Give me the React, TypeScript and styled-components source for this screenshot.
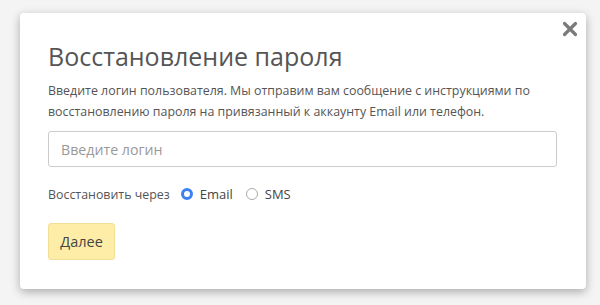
import React from "react";
import styled, { createGlobalStyle } from "styled-components";

const Global = createGlobalStyle`
  html, body { margin: 0; padding: 0; background: #f4f4f4; }
  body { font-family: "Open Sans", "DejaVu Sans", sans-serif; }
  * { box-sizing: border-box; }
`;

const Page = styled.div`
  width: 600px;
  height: 305px;
  padding: 13px 14px 16px 20px;
  background: #f4f4f4;
`;

const Modal = styled.div`
  position: relative;
  width: 566px;
  height: 276px;
  background: #fff;
  border-radius: 4px;
  box-shadow: 0 3px 10px rgba(0, 0, 0, 0.3);
  padding: 25px 28px 0 28px;
  display: flex;
  flex-direction: column;
`;

const Close = styled.button`
  position: absolute;
  top: 7px;
  right: 7px;
  width: 18px;
  height: 18px;
  padding: 0;
  border: 0;
  background: transparent;
  cursor: pointer;
  display: flex;
  align-items: center;
  justify-content: center;
`;

const Title = styled.h1`
  margin: 0;
  font-size: 25px;
  font-weight: 400;
  line-height: 36px;
  color: #555;
`;

const Desc = styled.p`
  margin: 6px 0 0;
  font-size: 12.4px;
  line-height: 21px;
  color: #555;
`;

const Input = styled.input`
  margin-top: 9px;
  width: 509px;
  height: 36px;
  border: 1px solid #ccc;
  border-radius: 3px;
  padding: 0 12px;
  font-family: inherit;
  font-size: 14.2px;
  color: #555;
  outline: none;
  &::placeholder { color: #999; }
`;

const Row = styled.div`
  margin-top: 18px;
  display: flex;
  align-items: center;
  font-size: 12.4px;
  color: #555;
  height: 18px;
`;

const RowLabel = styled.span`
  margin-right: 11px;
`;

const RadioLabel = styled.label`
  display: flex;
  align-items: center;
  gap: 7px;
  margin-right: 13px;
  font-size: 13px;
  color: #444;
`;

const RadioDot = styled.span<{ $checked?: boolean }>`
  width: 12px;
  height: 12px;
  border-radius: 50%;
  box-sizing: border-box;
  background: #fff;
  border: ${p => (p.$checked ? "3.5px solid #3b82f0" : "1px solid #aaa")};
`;

const Button = styled.button`
  margin-top: 20px;
  align-self: flex-start;
  width: 67px;
  height: 37px;
  background: #fdeda7;
  border: 1px solid #f1df95;
  border-radius: 3px;
  font-family: inherit;
  font-size: 14.5px;
  color: #444;
  cursor: pointer;
`;

export default function App() {
  return (
    <>
      <Global />
      <Page>
        <Modal>
          <Close aria-label="Закрыть">
            <svg width="16" height="16" viewBox="0 0 16 16">
              <path d="M2.5 2.5 L13.5 13.5 M13.5 2.5 L2.5 13.5" stroke="#7a7a7a" strokeWidth="3.2" strokeLinecap="round" />
            </svg>
          </Close>
          <Title>Восстановление пароля</Title>
          <Desc>
            Введите логин пользователя. Мы отправим вам сообщение с инструкциями по
            <br />
            восстановлению пароля на привязанный к аккаунту Email или телефон.
          </Desc>
          <Input placeholder="Введите логин" />
          <Row>
            <RowLabel>Восстановить через</RowLabel>
            <RadioLabel>
              <RadioDot $checked />
              Email
            </RadioLabel>
            <RadioLabel>
              <RadioDot />
              SMS
            </RadioLabel>
          </Row>
          <Button>Далее</Button>
        </Modal>
      </Page>
    </>
  );
}
